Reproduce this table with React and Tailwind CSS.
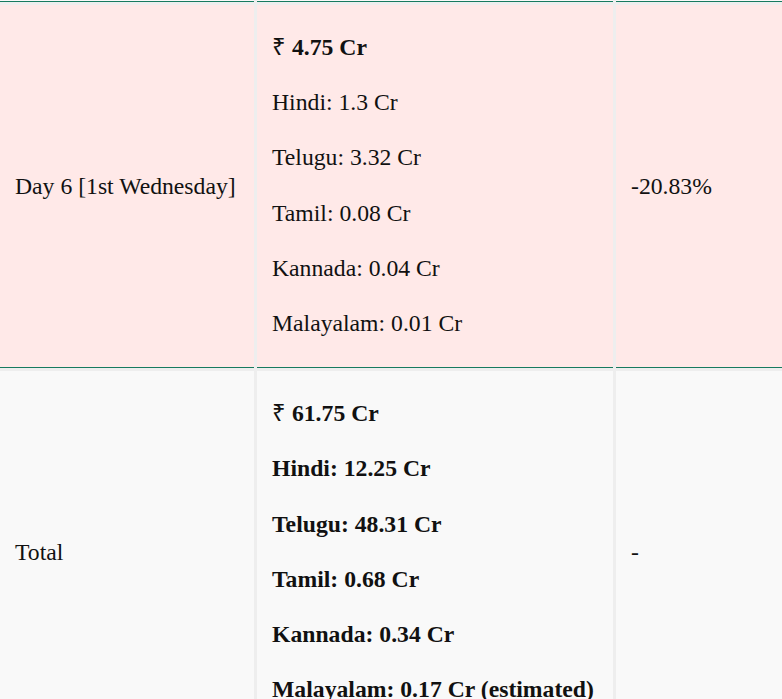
import React from "react";

const serif = { fontFamily: '"Liberation Serif", "Times New Roman", serif' };

function Cell({ bg, children }) {
  return (
    <div className={`${bg} border-b border-[#177a5f] flex flex-col justify-center px-[15px]`}>
      {children}
    </div>
  );
}

function Lines({ lines, boldAll }) {
  return (
    <div className="flex flex-col gap-[28px] pt-[29px] pb-[30px]">
      {lines.map((l, i) => (
        <div
          key={i}
          className={`leading-[27.2px] whitespace-nowrap ${boldAll || i === 0 ? "font-bold" : ""}`}
        >
          {l}
        </div>
      ))}
    </div>
  );
}

const Rs = () => <span className="font-normal">₹</span>;

export default function App() {
  return (
    <div
      className="w-[782px] h-[699px] overflow-hidden bg-[#eeeeee] text-[23.7px] text-[#111]"
      style={serif}
    >
      <div className="grid grid-cols-[254px_356px_1fr] gap-x-[3px]">
        <div className="h-[2px] bg-[#f9f9f9] border-b border-[#177a5f]" />
        <div className="h-[2px] bg-[#f9f9f9] border-b border-[#177a5f]" />
        <div className="h-[2px] bg-[#f9f9f9] border-b border-[#177a5f]" />
      </div>
      <div className="grid grid-cols-[254px_356px_1fr] gap-x-[3px] gap-y-[3px] mt-[3px]">
        <Cell bg="bg-[#ffe9e8]">
          <div className="leading-[27.2px]">Day 6 [1st Wednesday]</div>
        </Cell>
        <Cell bg="bg-[#ffe9e8]">
          <Lines
            lines={[
              <><Rs /> 4.75 Cr</>,
              "Hindi: 1.3 Cr",
              "Telugu: 3.32 Cr",
              "Tamil: 0.08 Cr",
              "Kannada: 0.04 Cr",
              "Malayalam: 0.01 Cr",
            ]}
          />
        </Cell>
        <Cell bg="bg-[#ffe9e8]">
          <div className="leading-[27.2px]">-20.83%</div>
        </Cell>

        <Cell bg="bg-[#f9f9f9]">
          <div className="leading-[27.2px]">Total</div>
        </Cell>
        <Cell bg="bg-[#f9f9f9]">
          <Lines
            boldAll
            lines={[
              <><Rs /> 61.75 Cr</>,
              "Hindi: 12.25 Cr",
              "Telugu: 48.31 Cr",
              "Tamil: 0.68 Cr",
              "Kannada: 0.34 Cr",
              "Malayalam: 0.17 Cr (estimated)",
            ]}
          />
        </Cell>
        <Cell bg="bg-[#f9f9f9]">
          <div className="leading-[27.2px]">-</div>
        </Cell>
      </div>
    </div>
  );
}
